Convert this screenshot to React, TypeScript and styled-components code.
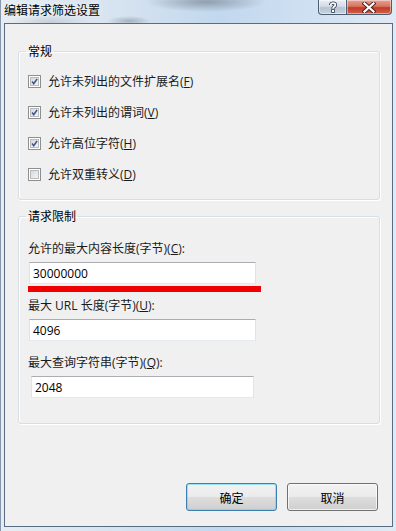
import React from "react";
import styled, { createGlobalStyle } from "styled-components";

const Global = createGlobalStyle`
  html, body { margin: 0; padding: 0; background: #fff; }
  body { font-family: "Open Sans", "Noto Sans CJK SC", sans-serif; font-size: 12px; color: #000; }
  * { box-sizing: border-box; }
`;

const Window = styled.div`
  width: 396px;
  height: 531px;
  display: flex;
  flex-direction: column;
  padding: 0 3px 4px 3px;
  background:
    radial-gradient(ellipse 60px 10px at 205px 2px, rgba(110,120,132,0.6), transparent),
    radial-gradient(ellipse 22px 5px at 128px 21px, rgba(110,120,130,0.45), transparent),
    radial-gradient(ellipse 40px 8px at 50px 22px, rgba(150,160,170,0.35), transparent),
    linear-gradient(90deg, #e6ecf2 0%, #d6e3f0 30%, #c2d8ee 55%, #d0e1f2 80%, #e0eaf4 100%);
  border-left: 1px solid #8797aa;
`;

const TitleBar = styled.div`
  height: 23px;
  display: flex;
  align-items: flex-start;
  flex-shrink: 0;
`;

const Title = styled.div`
  font-family: "Noto Sans CJK SC", sans-serif;
  font-size: 12px;
  line-height: 14px;
  padding-top: 3px;
  color: #000;
  text-shadow: 0 0 6px rgba(255,255,255,0.9);
`;

const Caption = styled.div`
  margin-left: auto;
  margin-right: 1px;
  display: flex;
  height: 15px;
`;

const CaptionButton = styled.div<{ $kind: "help" | "close" }>`
  width: ${(p) => (p.$kind === "help" ? "29px" : "45px")};
  height: 15px;
  display: flex;
  align-items: center;
  justify-content: center;
  border: 1px solid #4e5e72;
  border-top: none;
  border-left: ${(p) => (p.$kind === "close" ? "none" : "1px solid #4e5e72")};
  border-radius: ${(p) => (p.$kind === "help" ? "0 0 0 4px" : "0 0 4px 0")};
  background: ${(p) =>
    p.$kind === "help"
      ? "linear-gradient(#e8eef5 0%, #d3dbe5 45%, #b7c3d2 55%, #c8d3e0 100%)"
      : "linear-gradient(#e8a093 0%, #d77561 45%, #c23a26 55%, #d0634a 100%)"};
  box-shadow: inset 0 0 0 1px rgba(255,255,255,0.45);
`;

const Client = styled.div`
  flex: 1;
  display: flex;
  flex-direction: column;
  background: #f0f0f0;
  border: 1px solid #5a6c82;
  padding: 20px 12px 15px 13px;
`;

const Group = styled.fieldset<{ $bottom: number }>`
  margin: 0;
  border: 1px solid #d5dfe5;
  border-radius: 3px;
  box-shadow: 1px 1px 0 #fff, inset 1px 1px 0 #fff;
  padding: 0 9px ${(p) => p.$bottom}px 9px;
  min-width: 0;
  & + & { margin-top: 9px; }
`;

const Legend = styled.legend`
  font-family: "Noto Sans CJK SC", sans-serif;
  font-size: 12px;
  line-height: 14px;
  padding: 0 2px;
  margin-left: -2px;
  color: #000;
`;

const CheckList = styled.div`
  padding-top: 8px;
  display: flex;
  flex-direction: column;
`;

const CheckRow = styled.label`
  height: 31px;
  display: flex;
  align-items: center;
  gap: 7px;
`;

const Box = styled.span`
  width: 13px;
  height: 13px;
  border: 1px solid #8e8f8f;
  background: #fff;
  display: flex;
  align-items: center;
  justify-content: center;
  flex-shrink: 0;
  & > span {
    width: 9px;
    height: 9px;
    border: 1px solid #b8bbbf;
    background: linear-gradient(135deg, #d6d9dc, #f4f4f4);
    display: flex;
    align-items: center;
    justify-content: center;
  }
`;

const Text = styled.span`
  font-family: "Open Sans", "Noto Sans CJK SC", sans-serif;
  font-size: 12px;
  line-height: 16px;
  color: #1a1a1a;
  white-space: nowrap;
  u { text-decoration: underline; text-underline-offset: 1px; }
`;

const Fields = styled.div`
  padding-top: 18px;
  display: flex;
  flex-direction: column;
  gap: 14px;
`;

const Field = styled.div`
  display: flex;
  flex-direction: column;
  gap: 5px;
`;

const InputWrap = styled.div<{ $indent: number; $width: number }>`
  position: relative;
  margin-left: ${(p) => p.$indent}px;
  width: ${(p) => p.$width}px;
`;

const Input = styled.div`
  height: 22px;
  background: #fff;
  border: 1px solid #e2e3ea;
  border-top-color: #abadb3;
  border-bottom-color: #e3e9ef;
  padding: 0 3px;
  display: flex;
  align-items: center;
  font-family: "Open Sans", "Noto Sans CJK SC", sans-serif;
  font-size: 12px;
  color: #000;
`;

const RedMark = styled.div`
  position: absolute;
  left: -1px;
  top: calc(100% + 2px);
  width: 233px;
  height: 6px;
  background: #f00000;
`;

const Spacer = styled.div`
  flex: 1;
`;

const Buttons = styled.div`
  display: flex;
  justify-content: flex-end;
  gap: 10px;
  padding-right: 2px;
`;

const Button = styled.button<{ $default?: boolean }>`
  width: 91px;
  height: 28px;
  border-radius: 3px;
  border: 1px solid ${(p) => (p.$default ? "#3c7fb1" : "#707070")};
  background: linear-gradient(#f2f2f2 0%, #ebebeb 48%, #dddddd 52%, #cfcfcf 100%);
  box-shadow: inset 0 0 0 1px ${(p) => (p.$default ? "rgba(72,216,251,0.55)" : "rgba(255,255,255,0.7)")};
  font-family: "Noto Sans CJK SC", sans-serif;
  font-size: 12px;
  color: #000;
  padding: 0;
`;

const Check = ({ on }: { on: boolean }) => (
  <Box>
    <span>
      {on && (
        <svg width="9" height="9" viewBox="0 0 9 9">
          <path d="M1.4 4.4 L3.5 7.2 L7.8 1.2" fill="none" stroke="#3f558c" strokeWidth="2" />
        </svg>
      )}
    </span>
  </Box>
);

const checks: { label: string; key: string; on: boolean }[] = [
  { label: "允许未列出的文件扩展名", key: "F", on: true },
  { label: "允许未列出的谓词", key: "V", on: true },
  { label: "允许高位字符", key: "H", on: true },
  { label: "允许双重转义", key: "D", on: false },
];

const fields: { label: string; key: string; value: string; indent: number; width: number; mark?: boolean }[] = [
  { label: "允许的最大内容长度(字节)", key: "C", value: "30000000", indent: 1, width: 227, mark: true },
  { label: "最大 URL 长度(字节)", key: "U", value: "4096", indent: 1, width: 227 },
  { label: "最大查询字符串(字节)", key: "Q", value: "2048", indent: 3, width: 223 },
];

export default function App() {
  return (
    <>
      <Global />
      <Window>
        <TitleBar>
          <Title>编辑请求筛选设置</Title>
          <Caption>
            <CaptionButton $kind="help">
              <svg width="10" height="12" viewBox="0 0 10 12">
                <path d="M2.6 4 C2.6 1.6 7.4 1.6 7.4 4 C7.4 5.6 5 5.6 5 7.6" fill="none" stroke="#2c3b52" strokeWidth="3.4" />
                <path d="M2.6 4 C2.6 1.6 7.4 1.6 7.4 4 C7.4 5.6 5 5.6 5 7.6" fill="none" stroke="#fff" strokeWidth="1.8" />
                <rect x="3.6" y="8.6" width="2.8" height="2.8" fill="#fff" stroke="#2c3b52" strokeWidth="0.8" />
              </svg>
            </CaptionButton>
            <CaptionButton $kind="close">
              <svg width="14" height="11" viewBox="0 0 14 11">
                <path d="M2.5 1.5 L11.5 9.5 M11.5 1.5 L2.5 9.5" stroke="#4a1f1a" strokeWidth="4" strokeLinecap="square" />
                <path d="M2.5 1.5 L11.5 9.5 M11.5 1.5 L2.5 9.5" stroke="#fff" strokeWidth="2.2" strokeLinecap="square" />
              </svg>
            </CaptionButton>
          </Caption>
        </TitleBar>
        <Client>
          <Group $bottom={9}>
            <Legend>常规</Legend>
            <CheckList>
              {checks.map((c) => (
                <CheckRow key={c.key}>
                  <Check on={c.on} />
                  <Text>
                    {c.label}(<u>{c.key}</u>)
                  </Text>
                </CheckRow>
              ))}
            </CheckList>
          </Group>
          <Group $bottom={25}>
            <Legend>请求限制</Legend>
            <Fields>
              {fields.map((f) => (
                <Field key={f.key}>
                  <Text>
                    {f.label}(<u>{f.key}</u>):
                  </Text>
                  <InputWrap $indent={f.indent} $width={f.width}>
                    <Input>{f.value}</Input>
                    {f.mark && <RedMark />}
                  </InputWrap>
                </Field>
              ))}
            </Fields>
          </Group>
          <Spacer />
          <Buttons>
            <Button $default>确定</Button>
            <Button>取消</Button>
          </Buttons>
        </Client>
      </Window>
    </>
  );
}
